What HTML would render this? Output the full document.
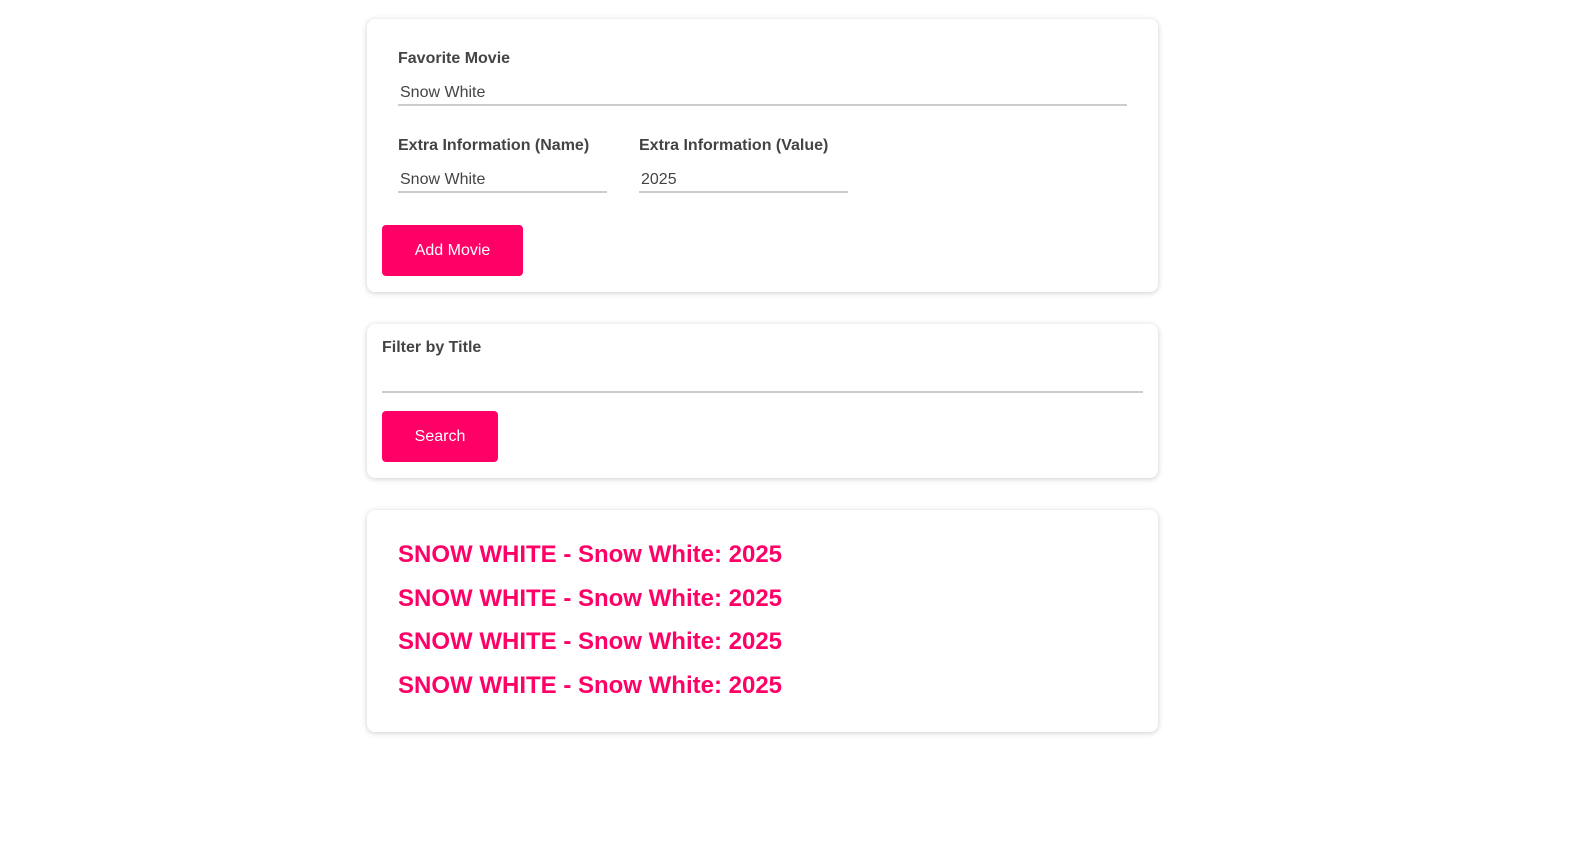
<!DOCTYPE html>
<html><head><style>
*{box-sizing:border-box;margin:0;padding:0}
body{background:#fff;font-family:"Liberation Sans",sans-serif;color:#444;width:1583px;height:849px;position:relative;overflow:hidden}
.card{position:absolute;left:367px;width:791px;background:#fff;border-radius:8px;box-shadow:0 1px 6px rgba(0,0,0,0.2)}
.abs{position:absolute}
.lbl{font-weight:bold;font-size:16px;line-height:18px}
.inp{font-size:16px;line-height:18px;padding-left:2px;border-bottom:2px solid #ccc;height:22px}
.btn{background:#ff0066;color:#fff;border-radius:4px;font-size:16px;display:flex;align-items:center;justify-content:center}
.item{color:#ff0066;font-weight:bold;font-size:24px;line-height:28px;left:31px}
</style></head><body>
<div class="card" style="top:19px;height:273px">
 <div class="abs lbl" style="left:31px;top:31px">Favorite Movie</div>
 <div class="abs inp" style="left:31px;top:65px;width:729px">Snow White</div>
 <div class="abs lbl" style="left:31px;top:118px">Extra Information (Name)</div>
 <div class="abs inp" style="left:31px;top:152px;width:209px">Snow White</div>
 <div class="abs lbl" style="left:272px;top:118px">Extra Information (Value)</div>
 <div class="abs inp" style="left:272px;top:152px;width:209px">2025</div>
 <div class="abs btn" style="left:15px;top:206px;width:141px;height:51px">Add Movie</div>
</div>
<div class="card" style="top:324px;height:154px">
 <div class="abs lbl" style="left:15px;top:15px">Filter by Title</div>
 <div class="abs inp" style="left:15px;top:47px;width:761px"></div>
 <div class="abs btn" style="left:15px;top:87px;width:116px;height:51px">Search</div>
</div>
<div class="card" style="top:510px;height:222px">
 <div class="abs item" style="top:31px">SNOW WHITE - Snow White: 2025</div>
 <div class="abs item" style="top:75px">SNOW WHITE - Snow White: 2025</div>
 <div class="abs item" style="top:118px">SNOW WHITE - Snow White: 2025</div>
 <div class="abs item" style="top:162px">SNOW WHITE - Snow White: 2025</div>
</div>
</body></html>
